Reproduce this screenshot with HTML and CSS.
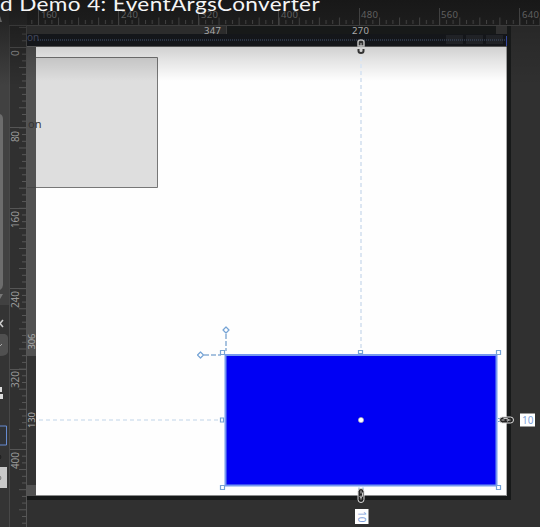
FILE: index.html
```html
<!DOCTYPE html>
<html lang="en">
<head>
<meta charset="utf-8">
<title>Designer</title>
<link rel="stylesheet" href="styles.css">
</head>
<body>
<div class="app">
  <aside class="panel">
    <svg width="9" height="527" viewBox="0 0 9 527">
      <defs>
        <linearGradient id="panel-shade" x1="0" y1="0" x2="0" y2="1">
          <stop offset="0" stop-color="#1c1c1c"/>
          <stop offset="1" stop-color="#414141"/>
        </linearGradient>
      </defs>
      <rect width="9" height="527" fill="#343434"/>
      <rect width="9" height="305" fill="#414141"/>
      <rect width="9" height="85" fill="url(#panel-shade)"/>
      <path d="M0 16L2 22H0Z" fill="#666"/>
      <path d="M0 114Q3 115 3 119V285Q3 288 0 290Z" fill="#6c6c6c"/>
      <path d="M0 294H3L0 299Z" fill="#777"/>
      <path d="M-3 320L3 327M3 320L-3 327" stroke="#ccc" stroke-width="1.5"/>
      <path d="M0 334H5Q8 335 8 338V352Q7 356 0 356Z" fill="#505050"/>
      <path d="M0 346L2 344" stroke="#aaa"/>
      <path d="M0 387H2V392H0ZM0 394H3V399H0Z" fill="#ddd"/>
      <path d="M0 426H6.5V445H0" fill="#303338" stroke="#668bd0"/>
      <path d="M0 455Q2 457 0 459" fill="none" stroke="#1c1c1c"/>
      <path d="M0 467H7V488H0Z" fill="#c9c9c9"/>
      <path d="M0 476Q2 478 0 480" fill="none" stroke="#777"/>
    </svg>
  </aside>
  <div class="corner"></div>
  <header class="ruler-x">
    <svg width="513" height="26" viewBox="27 0 513 26">
      <defs>
        <pattern id="tx" x="38" y="0" width="20.06" height="26" patternUnits="userSpaceOnUse">
          <path d="M.5 17.5V25M7.2 20V24M13.9 20V24" stroke="#404040"/>
        </pattern>
      </defs>
      <rect x="27" width="513" height="26" fill="url(#tx)"/>
      <path d="M38.5 8V25M118.5 8V25M198.5 8V25M278.5 8V25M359.5 8V25M439.5 8V25M519.5 8V25" stroke="#404040"/>
      <g class="tick-label">
        <text x="41" y="17.5" textLength="16">160</text>
        <text x="121" y="17.5" textLength="17">240</text>
        <text x="201" y="17.5" textLength="17">320</text>
        <text x="281" y="17.5" textLength="17">400</text>
        <text x="361" y="17.5" textLength="17">480</text>
        <text x="441" y="17.5" textLength="17">560</text>
        <text x="522" y="17.5" textLength="17">640</text>
      </g>
    </svg>
  </header>
  <div class="ruler-y">
    <svg width="18" height="501" viewBox="9 26 18 501">
      <defs>
        <pattern id="ty" x="9" y="47" width="18" height="20.1" patternUnits="userSpaceOnUse">
          <path d="M10 .5H17M13 7.2H17M13 13.9H17" stroke="#585858"/>
        </pattern>
        <linearGradient id="ruler-shade" x1="0" y1="0" x2="0" y2="1">
          <stop offset="0" stop-opacity=".35"/>
          <stop offset="1" stop-opacity="0"/>
        </linearGradient>
      </defs>
      <rect x="9" y="26" width="18" height="501" fill="url(#ty)"/>
      <path d="M10 47.5H26M10 127.5H26M10 208.5H26M10 288.5H26M10 369.5H26M10 449.5H26M26.5 26V527" stroke="#555"/>
      <g class="tick-label side">
        <text transform="translate(19 56) rotate(-90)">0</text>
        <text transform="translate(19 142) rotate(-90)" textLength="11">80</text>
        <text transform="translate(19 228) rotate(-90)" textLength="17">160</text>
        <text transform="translate(19 308) rotate(-90)" textLength="17">240</text>
        <text transform="translate(19 388) rotate(-90)" textLength="17">320</text>
        <text transform="translate(19 469) rotate(-90)" textLength="17">400</text>
      </g>
      <rect x="9" y="26" width="18" height="60" fill="url(#ruler-shade)"/>
    </svg>
  </div>
  <main class="stage">
    <svg width="513" height="501" viewBox="27 26 513 501">
      <defs>
        <linearGradient id="shade" x1="0" y1="0" x2="0" y2="1">
          <stop offset="0" stop-color="#000" stop-opacity=".18"/>
          <stop offset=".4" stop-color="#000" stop-opacity=".1"/>
          <stop offset="1" stop-color="#000" stop-opacity="0"/>
        </linearGradient>
        <g id="chain">
          <rect x="0" y="-3" width="14" height="6" rx="3" fill="#222" stroke="#ddd"/>
          <path d="M2 0H5M4 -1.5H8Q10 0 8 1.5M7 0H11" fill="none" stroke="#c8c8c8"/>
        </g>
      </defs>
      <rect x="27" y="26" width="513" height="501" fill="#303030"/>
      <rect x="507" y="26" width="33" height="60" fill="url(#shade)"/>
      <rect x="27" y="26" width="484" height="474" fill="#171919"/>
      <rect x="27" y="26" width="200" height="8" fill="#2c2c2c"/>
      <path d="M226.5 26V34" stroke="#3c3c3c"/>
      <rect x="496" y="26" width="11" height="8" fill="#303030"/>
      <rect x="27" y="34" width="480" height="13" fill="#14161a"/>
      <path d="M446 35h17v9h-17zM466 35h17v9h-17zM486 35h17v9h-17z" fill="#202226"/>
      <text class="window-title" x="27" y="41">on</text>
      <path d="M38 40H506" stroke="#42526f" stroke-dasharray="1 1"/>
      <path d="M506.5 36V47" stroke="#3448a0"/>
      <rect x="35" y="47" width="472" height="448.500" fill="#fefefe"/>
      <path d="M506.500 47V495.500" stroke="#aaa"/>
      <rect x="27" y="47" width="9" height="449" fill="#525252"/>
      <rect x="27" y="356" width="9" height="129" fill="#333"/>
      <rect x="36" y="57.500" width="121.500" height="130" fill="#dedede"/>
      <path d="M36 57.500H157.500V187.500H36" fill="none" stroke="#777"/>
      <path d="M27 187.500H36" stroke="#444"/>
      <text class="button-text" x="28" y="128">on</text>
      <rect x="27" y="47" width="480" height="34" fill="url(#shade)"/>
      <path d="M27 46.500H507" stroke="#555"/>

      <path d="M361 57V349" stroke="#dce6f2" stroke-width="2" stroke-dasharray="4 3"/>
      <path d="M39 420H221" stroke="#dfe9f3" stroke-width="2" stroke-dasharray="4 3"/>
      <rect x="225.500" y="355" width="271" height="130.500" fill="#0000f4" stroke="#7598ee" stroke-width="2"/>
      <path d="M226 334V351M204 355H221" stroke="#8baed5" stroke-width="1.500" stroke-dasharray="5 2"/>
      <g fill="#fff" stroke="#75a3d5" stroke-width="1.200">
        <path d="M226 327L229 330L226 333L223 330ZM200.500 352L203.500 355L200.500 358L197.500 355Z" stroke-linejoin="round"/>
        <path d="M220.500 350.500h4v4h-4zM496.500 350.500h4v4h-4zM220.500 485.500h4v4h-4zM496.500 485.500h4v4h-4zM358.500 350.500h4v3h-4zM220.500 418h3v4h-3z"/>
      </g>
      <path d="M359 487.500V490M363 487.500V490M498 418.500H501M498 421.500H501" stroke="#75a3d5"/>
      <circle cx="361" cy="420" r="2.600" fill="#fff" stroke="#aaa" stroke-width=".6"/>
      <use href="#chain" transform="translate(499.500 420)"/>
      <use href="#chain" transform="translate(361 488.500) rotate(90)"/>
      <g fill="none">
        <path d="M358 46V42Q358 40 361 40Q364 40 364 42V46Z" fill="#333" stroke="#bbb" stroke-width="1.500"/>
        <path d="M361 43V48" stroke="#bbb"/>
        <path d="M358.500 49V51Q358.500 53 361 53Q363.500 53 363.500 51V49" stroke="#333" stroke-width="2"/>
      </g>
      <g class="distance">
        <rect x="520" y="413.500" width="15" height="13"/>
        <text x="522" y="424">10</text>
        <rect x="355" y="509" width="13.500" height="15"/>
        <text transform="translate(358 511) rotate(90)">10</text>
      </g>
      <g class="measure">
        <text x="204" y="33.500" textLength="17">347</text>
        <text x="352" y="33.500" textLength="17">270</text>
        <text transform="translate(35 349.500) rotate(-90)" textLength="16">306</text>
        <text transform="translate(35 428) rotate(-90)" textLength="16">130</text>
      </g>
    </svg>
  </main>
  <svg class="caption" width="540" height="90" viewBox="0 0 540 90">
    <text x="0" y="11" textLength="320" lengthAdjust="spacingAndGlyphs">d Demo 4: EventArgsConverter</text>
  </svg>
</div>
</body>
</html>
```
FILE: styles.css
```css
body {
  margin: 0;
  background: #303030;
  font-family: "Noto Sans", "Open Sans", sans-serif;
}

svg {
  display: block;
}

.app {
  position: relative;
  display: grid;
  grid-template-columns: 9px 18px 513px;
  grid-template-rows: 26px 501px;
  width: 540px;
  height: 527px;
  overflow: hidden;
}

.panel {
  grid-row: 1 / 3;
}

.corner {
  background: linear-gradient(#1a1a1a, #232323);
  box-shadow: inset 0 -1px #383838;
}

.ruler-x {
  background: linear-gradient(#181818, #1d1d1d);
  box-shadow: inset 0 -1px #3c3c3c;
}

.ruler-y {
  background: linear-gradient(90deg, #484848 1px, #303030 1px);
}

.tick-label {
  font-size: 9.5px;
  fill: #606060;
}

.side {
  font-size: 10px;
  fill: #999;
}

.measure {
  font-size: 9.5px;
  fill: #aaa;
}

.window-title {
  font-size: 10px;
  fill: #42465a;
}

.button-text {
  font-size: 11px;
  fill: #333;
  opacity: .99;
}

.distance rect {
  fill: #fff;
}

.distance text {
  font-size: 10px;
  fill: #7e9fda;
}

.caption {
  position: absolute;
  top: 0;
  left: 0;
}

.caption text {
  font-family: Lato, sans-serif;
  font-size: 18.5px;
  letter-spacing: .3px;
  fill: #f5f5f5;
}
```
